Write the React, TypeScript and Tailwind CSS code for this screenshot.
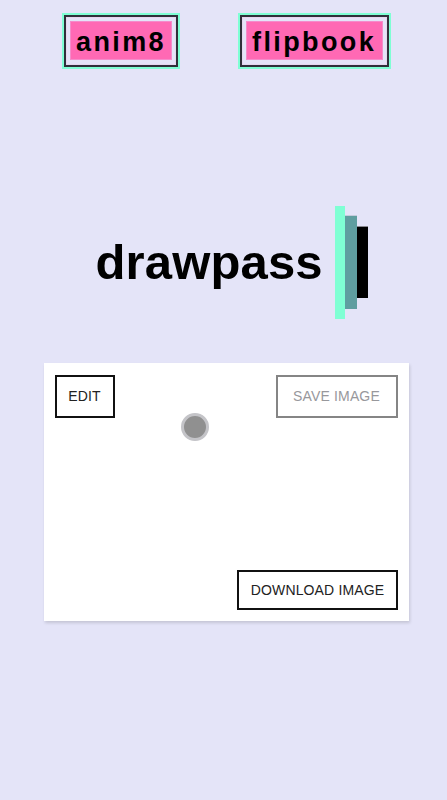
function NavLink({ label, className }: { label: string; className: string }) {
  return (
    <a
      className={`block h-14 shrink-0 border-2 border-[#7fffd4] ${className}`}
    >
      <span className="block h-full border-2 border-[#30303a] px-1 pt-1 pb-[5px] shadow-[inset_0_0_0_1px_#e6d6ef]">
        <span className="flex h-full items-center border border-[#f58bcb] bg-[#ff69b4] pt-[3px] pl-[5px] text-[27px] leading-none font-bold tracking-[2.4px] whitespace-nowrap">
          {label}
        </span>
      </span>
    </a>
  );
}

export default function App() {
  return (
    <main className="flex h-[800px] w-[447px] flex-col overflow-hidden bg-[#e4e4f8] font-['Liberation_Sans',Arial,sans-serif] text-black">
      <nav className="flex gap-[58px] pt-[13px] pl-[62px]">
        <NavLink label="anim8" className="w-[118px]" />
        <NavLink label="flipbook" className="w-[153px]" />
      </nav>

      <header className="mt-[137px] flex h-[113px] items-center pl-[95.5px]">
        <h1 className="w-[239.5px] pb-px text-[49px] leading-[56px] font-bold tracking-[0.15px] whitespace-nowrap">drawpass</h1>
        <div className="flex h-full items-start">
          <div className="h-[113px] w-2.5 bg-[#7fffd4]" />
          <div className="mt-[9px] h-[94px] w-3 border-t border-[#c5cbdc] bg-[#5f9ea0]" />
          <div className="mt-5 h-[72px] w-[11px] border-t border-[#88888f] bg-black" />
        </div>
      </header>

      <section className="mt-11 ml-11 flex h-[258px] w-[365px] flex-col justify-between bg-white px-[11px] pt-3 pb-[11px] text-[14px] shadow-[1px_2px_3px_rgba(0,0,0,0.14)]">
        <div className="flex justify-between">
          <button className="h-[43px] w-[60px] border-2 border-[#111] pr-px tracking-[0.1px] text-[#222]">EDIT</button>
          <button className="h-[43px] w-[122px] border-2 border-[#858585] pr-px tracking-[0.15px] text-[#98989c]">
            SAVE IMAGE
          </button>
        </div>
        <div className="-mt-[5px] ml-[126px] size-7 rounded-full border-[3px] border-[#c4c4c8] bg-[#909090]" />
        <div className="mt-auto flex justify-end">
          <button className="h-10 w-[161px] border-2 border-[#111] tracking-[0.15px] text-[#222]">DOWNLOAD IMAGE</button>
        </div>
      </section>
    </main>
  );
}
